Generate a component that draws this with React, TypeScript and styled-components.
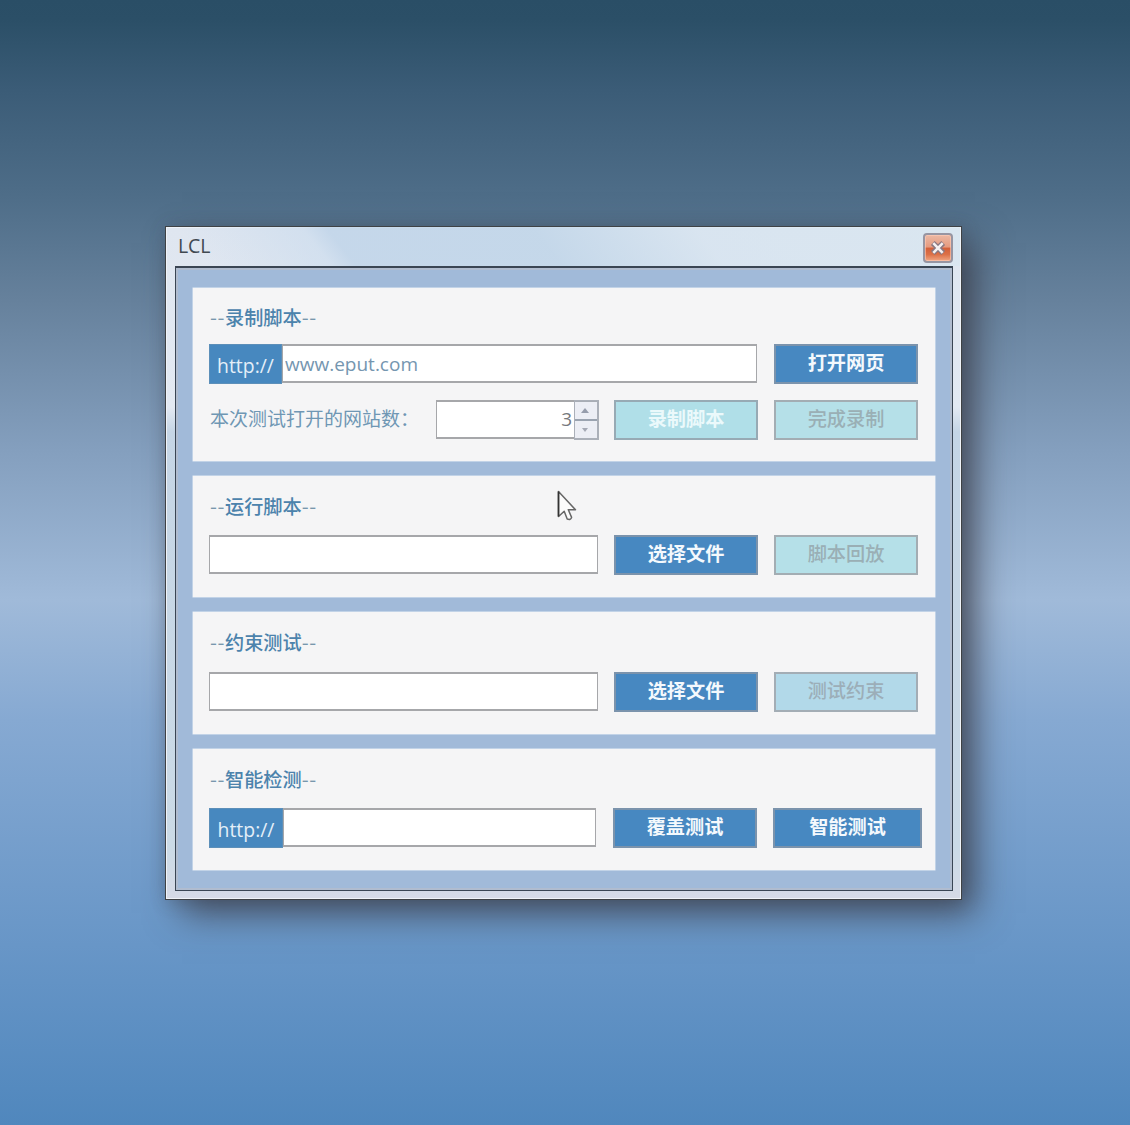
import React from "react";
import styled, { createGlobalStyle, css } from "styled-components";

const GlobalStyle = createGlobalStyle`
  * { box-sizing: border-box; }
  body { margin: 0; overflow: hidden; }
`;

const cjk = `"Open Sans", "Noto Sans CJK SC", sans-serif`;

const Desktop = styled.main`
  width: 1130px;
  height: 1125px;
  padding: 226px 0 0 165px;
  background: linear-gradient(
    180deg,
    #2a4e66 0px,
    #2b4f67 20px,
    #3b5c77 90px,
    #4e6d88 195px,
    #66819c 300px,
    #849fbe 450px,
    #a0bad9 600px,
    #86a9d2 720px,
    #6896c7 945px,
    #5087bd 1125px
  );
  font-family: ${cjk};
`;

const Window = styled.section`
  width: 797px;
  height: 674px;
  display: flex;
  flex-direction: column;
  padding: 0 8px 8px 9px;
  border: 1px solid #3f4245;
  background: linear-gradient(180deg, #dfe6f0 0, #e3e9f2 180px, #c5d5e5 205px, #cbdae6 620px, #d6dae6 100%);
  box-shadow: inset 0 0 0 1px #f0f3f8, 15px 15px 34px -2px rgba(60, 64, 76, 0.85),
    2px 2px 16px rgba(60, 66, 80, 0.3);
`;

const TitleBar = styled.header`
  display: flex;
  align-items: center;
  justify-content: space-between;
  height: 39px;
  flex: none;
  margin: 0 -7px 0 -8px;
  padding: 0 7px 2px 11px;
  background: linear-gradient(52deg, transparent 5%, rgba(205, 221, 238, 0.7) 20%, rgba(188, 210, 232, 0.75) 23%, rgba(190, 212, 232, 0.8) 48%, rgba(214, 228, 240, 0.7) 68%, rgba(214, 230, 240, 0.6) 100%);
`;

const Title = styled.h1`
  margin: 0;
  font: 400 19.5px/24px ${cjk};
  letter-spacing: -0.1px;
  color: #414951;
`;

const CloseButton = styled.button`
  display: grid;
  place-items: center;
  width: 30px;
  height: 30px;
  padding: 0;
  margin-top: 4px;
  border: 2px solid #9795a2;
  border-radius: 4px;
  background: linear-gradient(180deg, #ebb8a4 0, #e69b80 45%, #d4603a 52%, #dc7148 75%, #f0a683 100%);
  box-shadow: inset 0 0 0 1px rgba(255, 205, 185, 0.6);
`;

const Client = styled.div`
  flex: 1;
  display: flex;
  flex-direction: column;
  gap: 15px;
  padding: 20px 17px 0;
  border: 1px solid #3a4553;
  border-top-width: 2px;
  background: #a1bad9;
  box-shadow: inset 0 0 0 2px #b0bccf;
`;

const Panel = styled.section<{ $height: number }>`
  height: ${(p) => p.$height}px;
  flex: none;
  display: flex;
  flex-direction: column;
  padding: 0 0 0 16px;
  background: #f5f5f6;
  box-shadow: 0 0 0 0.5px #e3ebf6;
`;

const Heading = styled.h2<{ $height: number; $shift?: number }>`
  height: ${(p) => p.$height}px;
  flex: none;
  display: flex;
  align-items: center;
  margin: 0;
  padding: ${(p) => p.$shift ?? 2}px 0 0 1px;
  font: 500 19.2px/24px "Noto Sans CJK SC", sans-serif;
  color: #4c83ac;
  white-space: nowrap;
`;

const Dashes = styled.span`
  width: 15px;
  font-weight: 400;
  font-size: 20px;
  letter-spacing: 0.6px;
  color: #7897ad;
`;

const Row = styled.div<{ $top?: number }>`
  display: flex;
  align-items: flex-start;
  height: 40px;
  flex: none;
  margin-top: ${(p) => p.$top ?? 0}px;
`;

const Protocol = styled.span<{ $width: number }>`
  width: ${(p) => p.$width}px;
  height: 40px;
  flex: none;
  display: flex;
  align-items: center;
  justify-content: center;
  padding-top: 2px;
  border: 1px solid #5c8fb9;
  background: #4788bf;
  color: #e4eff8;
  font-size: 19.4px;
`;

const fieldBox = css`
  border: 2px solid #a6a7aa;
  border-left-width: 1.5px;
  border-right-width: 1.5px;
  background: #fff;
`;

const Field = styled.input<{ $width: number }>`
  ${fieldBox}
  width: ${(p) => p.$width}px;
  height: 39px;
  flex: none;
  padding: 1px 2px 0;
  border-radius: 0;
  outline: none;
  font: 400 19px/30px ${cjk};
  color: #7596b0;
`;

const Caption = styled.label`
  width: 227px;
  flex: none;
  padding-left: 1px;
  font: 400 19px/36px "Noto Sans CJK SC", sans-serif;
  color: #6f97b4;
  white-space: nowrap;
`;

const NumberBox = styled.div`
  display: flex;
  width: 163px;
  height: 40px;
  flex: none;
`;

const NumberValue = styled.output`
  ${fieldBox}
  border-right: 0;
  width: 138px;
  height: 39px;
  padding: 0 2px 0 0;
  text-align: right;
  font-size: 19px;
  line-height: 35px;
  color: #76797d;
`;

const Spinner = styled.div`
  display: flex;
  flex-direction: column;
  width: 25px;
  height: 40px;
  border: 2px solid #abb0b9;
  border-width: 1px 2px 2px 1px;
`;

const SpinButton = styled.button<{ $last?: boolean }>`
  flex: 1;
  display: grid;
  place-items: center;
  padding: 0 3px 0 0;
  border: 0;
  border-top: ${(p) => (p.$last ? "2px solid #9aa3b0" : "1px solid #a8adb5")};
  background: #eceef5;
`;

type Tone = "solid" | "busy" | "muted" | "mutedBlue";

const tones = {
  solid: css`
    background: #4788c1;
    color: #f4f9fd;
    border-color: #7b93ac;
    font-weight: 700;
  `,
  busy: css`
    background: #b0dfe8;
    color: #ebf9fb;
    border-color: #97aab4;
    font-weight: 700;
  `,
  muted: css`
    background: #b5e0e8;
    color: #9aafb5;
    border-color: #a3adb3;
    font-weight: 500;
  `,
  mutedBlue: css`
    background: #b2d9e9;
    color: #9caeb8;
    border-color: #a3adb5;
    font-weight: 500;
  `,
};

const Action = styled.button<{ $tone: Tone; $width?: number; $left?: number }>`
  width: ${(p) => p.$width ?? 144}px;
  height: 40px;
  flex: none;
  display: flex;
  align-items: center;
  justify-content: center;
  margin: 0 0 0 ${(p) => p.$left ?? 16}px;
  padding: 0 0 5px;
  border: 2px solid;
  border-radius: 0;
  font-family: "Noto Sans CJK SC", sans-serif;
  font-size: 19.2px;
  line-height: 24px;
  ${(p) => tones[p.$tone]}
`;

const Pointer = styled.svg`
  position: absolute;
  left: 556px;
  top: 489px;
`;

function SectionTitle(props: { text: string; height: number; shift?: number }) {
  return (
    <Heading $height={props.height} $shift={props.shift}>
      <Dashes>--</Dashes>
      {props.text}
      <Dashes>--</Dashes>
    </Heading>
  );
}

export default function App() {
  return (
    <Desktop>
      <GlobalStyle />
      <Window>
        <TitleBar>
          <Title>LCL</Title>
          <CloseButton aria-label="close">
            <svg width="18" height="16" viewBox="0 0 18 16">
              <path d="M3.8 3L14.2 13M14.2 3L3.8 13" stroke="#8a7780" strokeWidth="5.4" />
              <path d="M4.3 3.2L13.7 12.8M13.7 3.2L4.3 12.8" stroke="#f5f0f0" strokeWidth="2.6" />
            </svg>
          </CloseButton>
        </TitleBar>
        <Client>
          <Panel $height={173}>
            <SectionTitle text="录制脚本" height={56} />
            <Row>
              <Protocol $width={73}>http://</Protocol>
              <Field $width={475} defaultValue="www.eput.com" />
              <Action $tone="solid" $left={17}>打开网页</Action>
            </Row>
            <Row $top={16}>
              <Caption>本次测试打开的网站数：</Caption>
              <NumberBox>
                <NumberValue>3</NumberValue>
                <Spinner>
                  <SpinButton aria-label="up">
                    <svg width="8" height="5" viewBox="0 0 8 5"><path d="M0 5L4 0L8 5Z" fill="#969dac" /></svg>
                  </SpinButton>
                  <SpinButton $last aria-label="down">
                    <svg width="6" height="4" viewBox="0 0 6 4"><path d="M0 0L3 4L6 0Z" fill="#a5a9b5" /></svg>
                  </SpinButton>
                </Spinner>
              </NumberBox>
              <Action $tone="busy" $left={15}>录制脚本</Action>
              <Action $tone="muted">完成录制</Action>
            </Row>
          </Panel>
          <Panel $height={121}>
            <SectionTitle text="运行脚本" height={59} shift={0} />
            <Row>
              <Field $width={389} />
              <Action $tone="solid">选择文件</Action>
              <Action $tone="muted">脚本回放</Action>
            </Row>
          </Panel>
          <Panel $height={122}>
            <SectionTitle text="约束测试" height={60} shift={0} />
            <Row>
              <Field $width={389} />
              <Action $tone="solid">选择文件</Action>
              <Action $tone="mutedBlue">测试约束</Action>
            </Row>
          </Panel>
          <Panel $height={121}>
            <SectionTitle text="智能检测" height={59} shift={1} />
            <Row>
              <Protocol $width={74}>http://</Protocol>
              <Field $width={313} />
              <Action $tone="solid" $left={17}>覆盖测试</Action>
              <Action $tone="solid" $width={149}>智能测试</Action>
            </Row>
          </Panel>
        </Client>
      </Window>
      <Pointer width="24" height="36" viewBox="0 0 24 36">
        <path
          d="M2.5 2.5V27.5L8.2 22.2L11.2 30Q14.8 31.3 15.6 28.4L12.3 20.8H19.5Z"
          fill="#fbfbfb"
          stroke="#666"
          strokeWidth="1.5"
          strokeLinejoin="round"
        />
        <path d="M2.5 2.5V27.5" stroke="#333" strokeWidth="1.6" />
      </Pointer>
    </Desktop>
  );
}
